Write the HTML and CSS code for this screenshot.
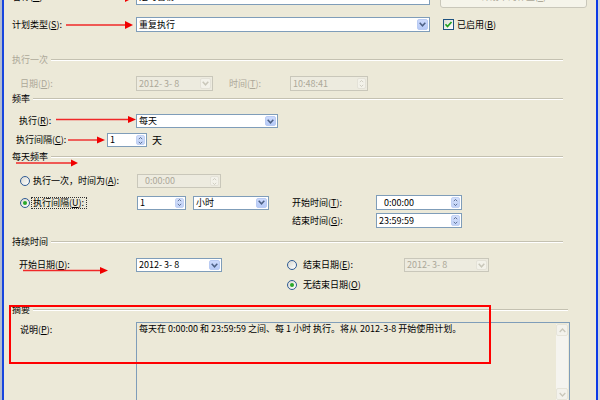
FILE: index.html
```html
<!DOCTYPE html>
<html lang="zh-CN">
<head>
<meta charset="utf-8">
<title>新建作业计划</title>
<link rel="stylesheet" href="styles.css">
</head>
<body>
<div class="screen">
  <div class="frame-l"></div>
  <div class="dlg">
    <div class="row r-name">
      <span class="lbl w-lab">名称(<u>N</u>):</span>
      <div class="tb w-main"><span class="val">定时备份</span></div>
      <div class="btn">计划中的作业(<u>J</u>)</div>
    </div>

    <div class="row r-type">
      <span class="lbl w-lab">计划类型(<u>S</u>):</span>
      <div class="tb w-main"><span class="val">重复执行</span><span class="dd"><svg width="7" height="5" viewBox="0 0 7 5"><path d="M0.7 0.8 L3.5 3.8 L6.3 0.8" fill="none" stroke="#4D6185" stroke-width="1.5"/></svg></span></div>
      <span class="chk"><svg width="9" height="9" viewBox="0 0 9 9"><path d="M1.5 4.3 L3.5 6.5 L7.5 2" fill="none" stroke="#21A121" stroke-width="1.7"/></svg></span>
      <span class="chk-t">已启用(<u>B</u>)</span>
    </div>

    <div class="grp g-once dis-t"><span class="gt">执行一次</span><span class="gl"></span></div>

    <div class="row r-date">
      <span class="lbl ind w116 dis-t">日期(<u>D</u>):</span>
      <div class="tb dis w-date"><span class="val">2012- 3- 8</span><span class="dd dd-dis"><svg width="7" height="5" viewBox="0 0 7 5"><path d="M0.7 0.8 L3.5 3.8 L6.3 0.8" fill="none" stroke="#C9C7BA" stroke-width="1.5"/></svg></span></div>
      <span class="lbl dis-t w-timel">时间(<u>T</u>):</span>
      <div class="tb dis w-time"><span class="val">10:48:41</span><span class="spin spin-dis"><svg width="8" height="11" viewBox="0 0 8 11"><path d="M2 4 L4 2 L6 4" fill="none" stroke="#C9C7BA"/><path d="M2 7 L4 9 L6 7" fill="none" stroke="#C9C7BA"/></svg></span></div>
    </div>

    <div class="grp g-freq"><span class="gt">频率</span><span class="gl"></span></div>

    <div class="row r-exec">
      <span class="lbl ind2 w117">执行(<u>R</u>):</span>
      <div class="tb w-exec"><span class="val">每天</span><span class="dd"><svg width="7" height="5" viewBox="0 0 7 5"><path d="M0.7 0.8 L3.5 3.8 L6.3 0.8" fill="none" stroke="#4D6185" stroke-width="1.5"/></svg></span></div>
    </div>

    <div class="row r-int">
      <span class="lbl ind3 w91">执行间隔(<u>C</u>):</span>
      <div class="tb w-int"><span class="val">1</span><span class="spin"><svg width="8" height="11" viewBox="0 0 8 11"><path d="M2 4 L4 2 L6 4" fill="none" stroke="#4D6185"/><path d="M2 7 L4 9 L6 7" fill="none" stroke="#4D6185"/></svg></span></div>
      <span class="lbl unit">天</span>
    </div>

    <div class="grp g-daily"><span class="gt">每天频率</span><span class="gl"></span></div>

    <div class="row r-once">
      <div class="lead">
        <span class="rad"></span>
        <span class="lbl rad-t">执行一次，时间为(<u>A</u>):</span>
      </div>
      <div class="tb dis w-oncet"><span class="val pad5 dis-t">0:00:00</span><span class="spin spin-dis"><svg width="8" height="11" viewBox="0 0 8 11"><path d="M2 4 L4 2 L6 4" fill="none" stroke="#C9C7BA"/><path d="M2 7 L4 9 L6 7" fill="none" stroke="#C9C7BA"/></svg></span></div>
    </div>

    <div class="row r-every">
      <div class="lead">
        <span class="rad on"></span>
        <span class="lbl focus">执行间隔(<u>U</u>):</span>
      </div>
      <div class="tb w-evn"><span class="val">1</span><span class="spin"><svg width="8" height="11" viewBox="0 0 8 11"><path d="M2 4 L4 2 L6 4" fill="none" stroke="#4D6185"/><path d="M2 7 L4 9 L6 7" fill="none" stroke="#4D6185"/></svg></span></div>
      <div class="tb w-unit"><span class="val">小时</span><span class="dd"><svg width="7" height="5" viewBox="0 0 7 5"><path d="M0.7 0.8 L3.5 3.8 L6.3 0.8" fill="none" stroke="#4D6185" stroke-width="1.5"/></svg></span></div>
      <span class="lbl st-l w84">开始时间(<u>T</u>):</span>
      <div class="tb w-st"><span class="val pad5">0:00:00</span><span class="spin"><svg width="8" height="11" viewBox="0 0 8 11"><path d="M2 4 L4 2 L6 4" fill="none" stroke="#4D6185"/><path d="M2 7 L4 9 L6 7" fill="none" stroke="#4D6185"/></svg></span></div>
    </div>

    <div class="row r-end">
      <span class="lbl et-l w84">结束时间(<u>G</u>):</span>
      <div class="tb w-st"><span class="val">23:59:59</span><span class="spin"><svg width="8" height="11" viewBox="0 0 8 11"><path d="M2 4 L4 2 L6 4" fill="none" stroke="#4D6185"/><path d="M2 7 L4 9 L6 7" fill="none" stroke="#4D6185"/></svg></span></div>
    </div>

    <div class="grp g-dur"><span class="gt">持续时间</span><span class="gl"></span></div>

    <div class="row r-sd">
      <span class="lbl ind2 w117">开始日期(<u>D</u>):</span>
      <div class="tb w-sd"><span class="val">2012- 3- 8</span><span class="dd"><svg width="7" height="5" viewBox="0 0 7 5"><path d="M0.7 0.8 L3.5 3.8 L6.3 0.8" fill="none" stroke="#4D6185" stroke-width="1.5"/></svg></span></div>
      <span class="rad sd-rad"></span>
      <span class="lbl rad-t2 w101">结束日期(<u>E</u>):</span>
      <div class="tb dis w-ed"><span class="val dis-t">2012- 3- 8</span><span class="dd dd-dis"><svg width="7" height="5" viewBox="0 0 7 5"><path d="M0.7 0.8 L3.5 3.8 L6.3 0.8" fill="none" stroke="#C9C7BA" stroke-width="1.5"/></svg></span></div>
    </div>

    <div class="row r-noend">
      <span class="rad on ne-rad"></span>
      <span class="lbl rad-t2">无结束日期(<u>O</u>)</span>
    </div>

    <div class="grp g-sum"><span class="gt">摘要</span><span class="gl"></span></div>

    <div class="row r-desc">
      <span class="lbl ind w116 desc-l">说明(<u>P</u>):</span>
      <div class="memo">
        <div class="memo-t">每天在 0:00:00 和 23:59:59 之间、每 1 小时 执行。将从 2012-3-8 开始使用计划。</div>
        <div class="vs">
          <span class="vs-b"><svg width="7" height="5" viewBox="0 0 7 5"><path d="M0.7 4 L3.5 1 L6.3 4" fill="none" stroke="#C9C7BA" stroke-width="1.3"/></svg></span>
          <span class="vs-track"></span>
          <span class="vs-b"><svg width="7" height="5" viewBox="0 0 7 5"><path d="M0.7 1 L3.5 4 L6.3 1" fill="none" stroke="#C9C7BA" stroke-width="1.3"/></svg></span>
        </div>
      </div>
    </div>
  </div>
  <div class="frame-r"></div>
</div>

<svg class="annot" width="600" height="400" viewBox="0 0 600 400">
  <g stroke="#F02828" stroke-width="1.4" fill="none">
    <line x1="70" y1="-2" x2="126" y2="-2"/>
    <line x1="66" y1="25" x2="126" y2="25"/>
    <line x1="56" y1="119.5" x2="129" y2="119.5"/>
    <line x1="68" y1="140" x2="98" y2="140"/>
    <line x1="16" y1="163" x2="72" y2="163"/>
    <line x1="23" y1="270.5" x2="101" y2="270.5"/>
  </g>
  <rect x="10" y="306" width="480" height="57" fill="none" stroke="#FF0000" stroke-width="2"/>
  <g fill="#F00000">
    <polygon points="125,-6 133,-2 125,2"/>
    <polygon points="125,21 133,25 125,29"/>
    <polygon points="128,116 136,119.5 128,123"/>
    <polygon points="97,136.5 105,140 97,143.5"/>
    <polygon points="71,159.5 78,163 71,166.5"/>
    <polygon points="100,267 108,270.5 100,274"/>
  </g>
</svg>
</body>
</html>
```

FILE: styles.css
```css
* { box-sizing: border-box; }
html, body { margin: 0; padding: 0; }
body {
  width: 600px;
  height: 400px;
  overflow: hidden;
  position: relative;
  background: #ECE9D8;
  font-family: "Noto Sans CJK SC", "Noto Sans", sans-serif;
  font-size: 9px;
  line-height: 12px;
  color: #000;
}
u { text-decoration: underline; }

.screen { display: flex; height: 400px; }
.frame-l {
  width: 4px; flex-shrink: 0;
  background: linear-gradient(to right, #b4bccf 0 2px, #1745de 2px 4px);
}
.frame-r {
  width: 4px; flex-shrink: 0;
  background: linear-gradient(to right, #0b3ae6 0 2px, #cfd4df 2px 4px);
}
.dlg {
  width: 592px; flex-shrink: 0;
  padding-left: 8px;
  display: flex; flex-direction: column;
}

.row { display: flex; align-items: center; flex-shrink: 0; height: 15px; }
.row > * { flex-shrink: 0; }
.lbl { white-space: nowrap; display: block; }
.dis-t { color: #ACA899; }

/* widths */
.w-lab { width: 124px; }
.w116 { width: 116px; }
.w117 { width: 117px; }
.w91 { width: 91px; }
.w84 { width: 84px; }
.w101 { width: 101px; }
.ind { margin-left: 8px; }
.ind2 { margin-left: 7px; }
.ind3 { margin-left: 4px; }

/* text boxes */
.tb {
  height: 100%;
  border: 1px solid #7F9DB9;
  background: #fff;
  display: flex; align-items: center;
  padding-left: 2px;
  overflow: hidden;
  white-space: nowrap;
}
.tb.dis { border-color: #C9C7BA; background: #EDEBDF; color: #ACA899; }
.val { flex: 1; }
.pad5 { padding-left: 5px; }
.dd {
  width: 11px; height: calc(100% - 2px);
  margin-right: 1px;
  background: linear-gradient(#CCDAFD, #B6CAF7);
  border: 1px solid #B9CBF3;
  border-radius: 2px;
  display: flex; align-items: center; justify-content: center;
}
.dd-dis { background: #F3F2EA; border-color: #E4E2D8; }
.spin {
  width: 9px; height: calc(100% - 2px);
  margin-right: 1px;
  background: linear-gradient(#D3DFFB, #C2D3F8);
  border: 1px solid #C2D2F4;
  border-radius: 2px;
  display: flex; align-items: center; justify-content: center;
}
.spin svg { display: block; }
.spin-dis { background: #F3F2EA; border-color: #E4E2D8; }

/* row specifics */
.r-name { margin-top: -11px; height: 16px; }
.w-main { width: 294px; }
.btn {
  align-self: flex-start;
  margin-top: -4px;
  margin-left: 10px;
  width: 147px; height: 23px;
  border: 1px solid #C9C7BA;
  border-radius: 3px;
  background: #F5F4EA;
  color: #ACA899;
  display: flex; align-items: center; justify-content: center;
}

.r-type { margin-top: 12px; }
.chk {
  margin-left: 13px;
  width: 11px; height: 11px;
  border: 1px solid #1C5180;
  background: linear-gradient(135deg, #DCDCD4, #fff);
  display: flex; align-items: center; justify-content: center;
}
.chk-t { margin-left: 3px; white-space: nowrap; }

.grp { display: flex; align-items: center; height: 12px; width: 551px; flex-shrink: 0; }
.gt { white-space: nowrap; }
.gl {
  flex: 1;
  margin-left: 3px;
  height: 2px;
  border-top: 1px solid #C4C1B1;
  border-bottom: 1px solid #fff;
}
.g-once { margin-top: 22px; }
.r-date { margin-top: 10px; }
.w-date { width: 77px; }
.w-timel { margin-left: 16px; width: 61px; }
.w-time { width: 78px; }

.g-freq { margin-top: 2px; }
.r-exec { margin-top: 9px; height: 14px; }
.w-exec { width: 142px; }
.r-int { margin-top: 5px; height: 14px; }
.w-int { width: 40px; }
.unit { margin-left: 5px; font-size: 10px; }

.g-daily { margin-top: 4px; }
.lead { display: flex; align-items: center; width: 125px; height: 100%; }
.rad {
  margin-left: 8px;
  width: 10px; height: 10px;
  flex-shrink: 0;
  border-radius: 50%;
  border: 1px solid #2F5B94;
  background: linear-gradient(135deg, #D8D8D0, #fff);
  display: flex; align-items: center; justify-content: center;
}
.rad.on::after {
  content: "";
  width: 4px; height: 4px;
  border-radius: 50%;
  background: #2AA82A;
}
.rad-t { margin-left: 3px; }
.r-once { margin-top: 11px; height: 14px; }
.w-oncet { width: 84px; }

.r-every { margin-top: 7px; }
.focus {
  margin-left: 1px;
  height: 12px;
  border: 1px dotted #333;
  padding: 0 2px 0 1px;
  line-height: 10px;
}
.w-evn { width: 49px; height: 14px; }
.w-unit { width: 76px; height: 14px; margin-left: 7px; }
.st-l { margin-left: 23px; }
.w-st { width: 86px; }

.r-end { margin-top: 3px; }
.et-l { margin-left: 280px; }

.g-dur { margin-top: 8px; }
.r-sd { margin-top: 10px; height: 14px; }
.w-sd { width: 86px; }
.sd-rad { margin-left: 65px; }
.rad-t2 { margin-left: 6px; }
.w-ed { width: 85px; }

.r-noend { margin-top: 6px; height: 14px; }
.ne-rad { margin-left: 275px; }

.g-sum { margin-top: 12px; width: 556px; }
.r-desc { margin-top: 6px; height: 80px; align-items: flex-start; }
.desc-l { margin-top: 2px; }
.memo {
  width: 434px; height: 80px;
  border: 1px solid #7F9DB9;
  background: #ECE9D8;
  display: flex;
}
.memo-t { flex: 1; padding: 0 2px; white-space: nowrap; }
.vs {
  width: 12px;
  margin: 1px 1px 1px 0;
  background: #F5F4EF;
  display: flex; flex-direction: column;
}
.vs-b {
  height: 12px;
  border: 1px solid #E6E4D9;
  border-radius: 2px;
  background: #F3F2EC;
  display: flex; align-items: center; justify-content: center;
}
.vs-track { flex: 1; }

.annot { position: absolute; left: 0; top: 0; pointer-events: none; overflow: visible; }
```
